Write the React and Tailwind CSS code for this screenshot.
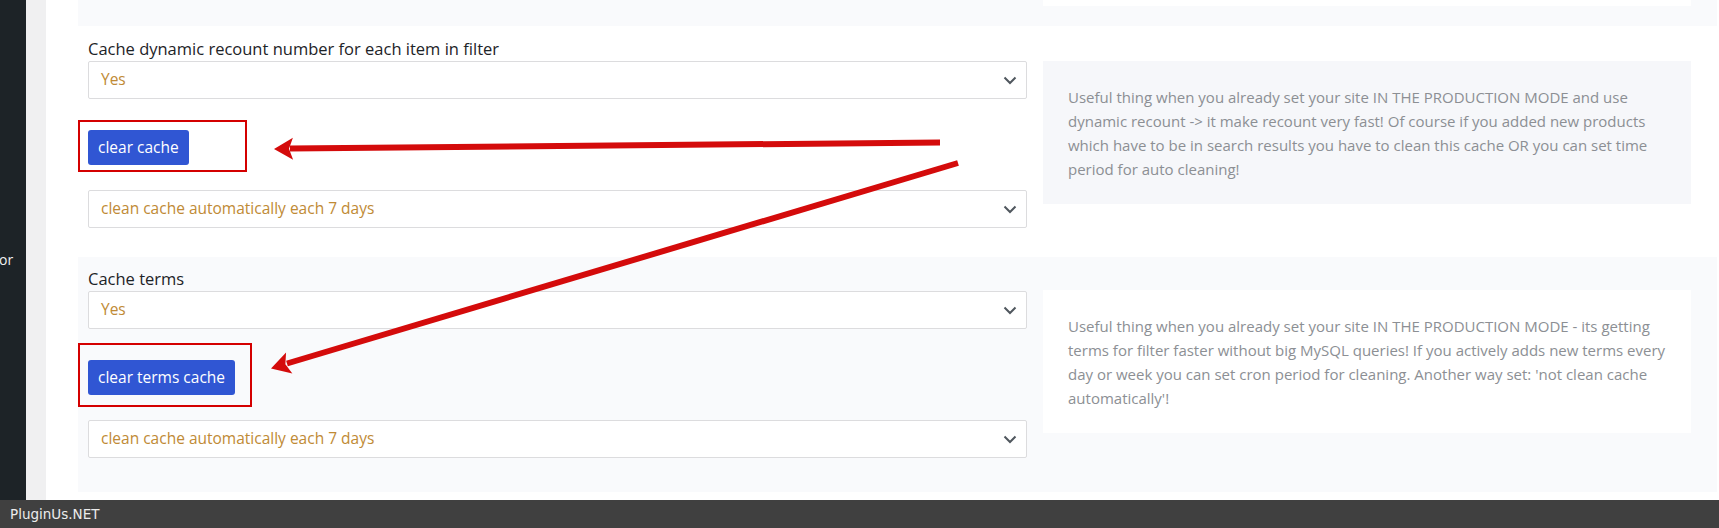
import React from 'react';

const sections = [
  {
    label: 'Cache dynamic recount number for each item in filter',
    button: 'clear cache',
    help:
      'Useful thing when you already set your site IN THE PRODUCTION MODE and use dynamic recount -> it make recount very fast! Of course if you added new products which have to be in search results you have to clean this cache OR you can set time period for auto cleaning!',
    wrap: 'bg-white pt-[11px] pb-[29px]',
    helpBox: 'bg-[#f6f7fa] mt-[24px]',
  },
  {
    label: 'Cache terms',
    button: 'clear terms cache',
    help:
      "Useful thing when you already set your site IN THE PRODUCTION MODE - its getting terms for filter faster without big MySQL queries! If you actively adds new terms every day or week you can set cron period for cleaning. Another way set: 'not clean cache automatically'!",
    wrap: 'bg-[#f9fafc] pt-[10px] pb-[34px]',
    helpBox: 'bg-white mt-[23px]',
  },
];

// fake select, looks like the wp-admin one
const Select = ({ value, className = '' }) => (
  <div className={`h-[38px] flex items-center justify-between pl-[12px] pr-[9px] bg-white border border-[#dcdcde] rounded-[2px] ${className}`}>
    <span className="text-[15.5px] text-[#c08a35]">{value}</span>
    <svg width="14" height="9" viewBox="0 0 14 9" fill="none">
      <path d="M1.5 1.5 L7 7 L12.5 1.5" stroke="#50575e" strokeWidth="2" />
    </svg>
  </div>
);

const Section = ({ s }) => (
  <div className={`flex gap-[16px] pl-[10px] pr-[26px] ${s.wrap}`}>
    <div className="w-[939px] flex flex-col">
      <label className="text-[16.5px] leading-6 text-[#1d2327]">{s.label}</label>
      <Select value="Yes" />
      <div className="mt-[31px] flex">
        <button className="h-[35px] px-[10px] bg-[#3056d3] text-white text-[15.5px] rounded-[3px]">
          {s.button}
        </button>
      </div>
      <Select value="clean cache automatically each 7 days" className="mt-[25px]" />
    </div>
    <div className={`w-[648px] h-[143px] px-[25px] flex items-center ${s.helpBox}`}>
      <p className="text-[15px] leading-6 text-[#8c8f94]">{s.help}</p>
    </div>
  </div>
);

// arrow head polygon pointing at (tx,ty) coming from (fx,fy)
const head = (fx, fy, tx, ty, len = 19, half = 11) => {
  const d = Math.hypot(tx - fx, ty - fy);
  const ux = (tx - fx) / d;
  const uy = (ty - fy) / d;
  const bx = tx - ux * len;
  const by = ty - uy * len;
  return `${tx},${ty} ${bx - uy * half},${by + ux * half} ${tx - ux * (len - 4)},${ty - uy * (len - 4)} ${bx + uy * half},${by - ux * half}`;
};

const Annotations = () => (
  <svg className="absolute inset-0 pointer-events-none" width="1719" height="528">
    <rect x="79" y="121" width="167" height="50" fill="none" stroke="#d40000" strokeWidth="2" />
    <rect x="79" y="344" width="172" height="62" fill="none" stroke="#d40000" strokeWidth="2" />
    <line x1="940" y1="142.5" x2="290" y2="148.5" stroke="#d40b0b" strokeWidth="6" />
    <polygon points={head(940, 142.5, 274, 149)} fill="#d40b0b" />
    <line x1="958" y1="163" x2="287" y2="363.5" stroke="#d40b0b" strokeWidth="6" />
    <polygon points={head(958, 163, 271, 368.5)} fill="#d40b0b" />
  </svg>
);

export default function App() {
  return (
    <div className="relative w-[1719px] h-[528px] overflow-hidden bg-white flex flex-col font-['Open_Sans','Noto_Sans',sans-serif]">
      <div className="flex flex-1 min-h-0">
        <aside className="w-[26px] bg-[#1d2327] pt-[249px] overflow-hidden">
          <span className="block text-[14px] text-[#f0f0f1] -ml-[1px]">or</span>
        </aside>
        <div className="w-[20px] bg-[#f0f0f1]" />
        <main className="flex-1 pl-[32px] pr-[2px]">
          <div className="h-[26px] bg-[#f9fafc] flex justify-end pr-[26px]">
            <div className="w-[648px] h-[6px] bg-white" />
          </div>
          {sections.map((s, i) => (
            <Section key={i} s={s} />
          ))}
        </main>
      </div>
      <footer className="h-[28px] bg-[#404040] flex items-center pl-[10px]">
        <span className="text-[13.5px] text-[#ececec] font-['DejaVu_Sans',sans-serif]">PluginUs.NET</span>
      </footer>
      <Annotations />
    </div>
  );
}
